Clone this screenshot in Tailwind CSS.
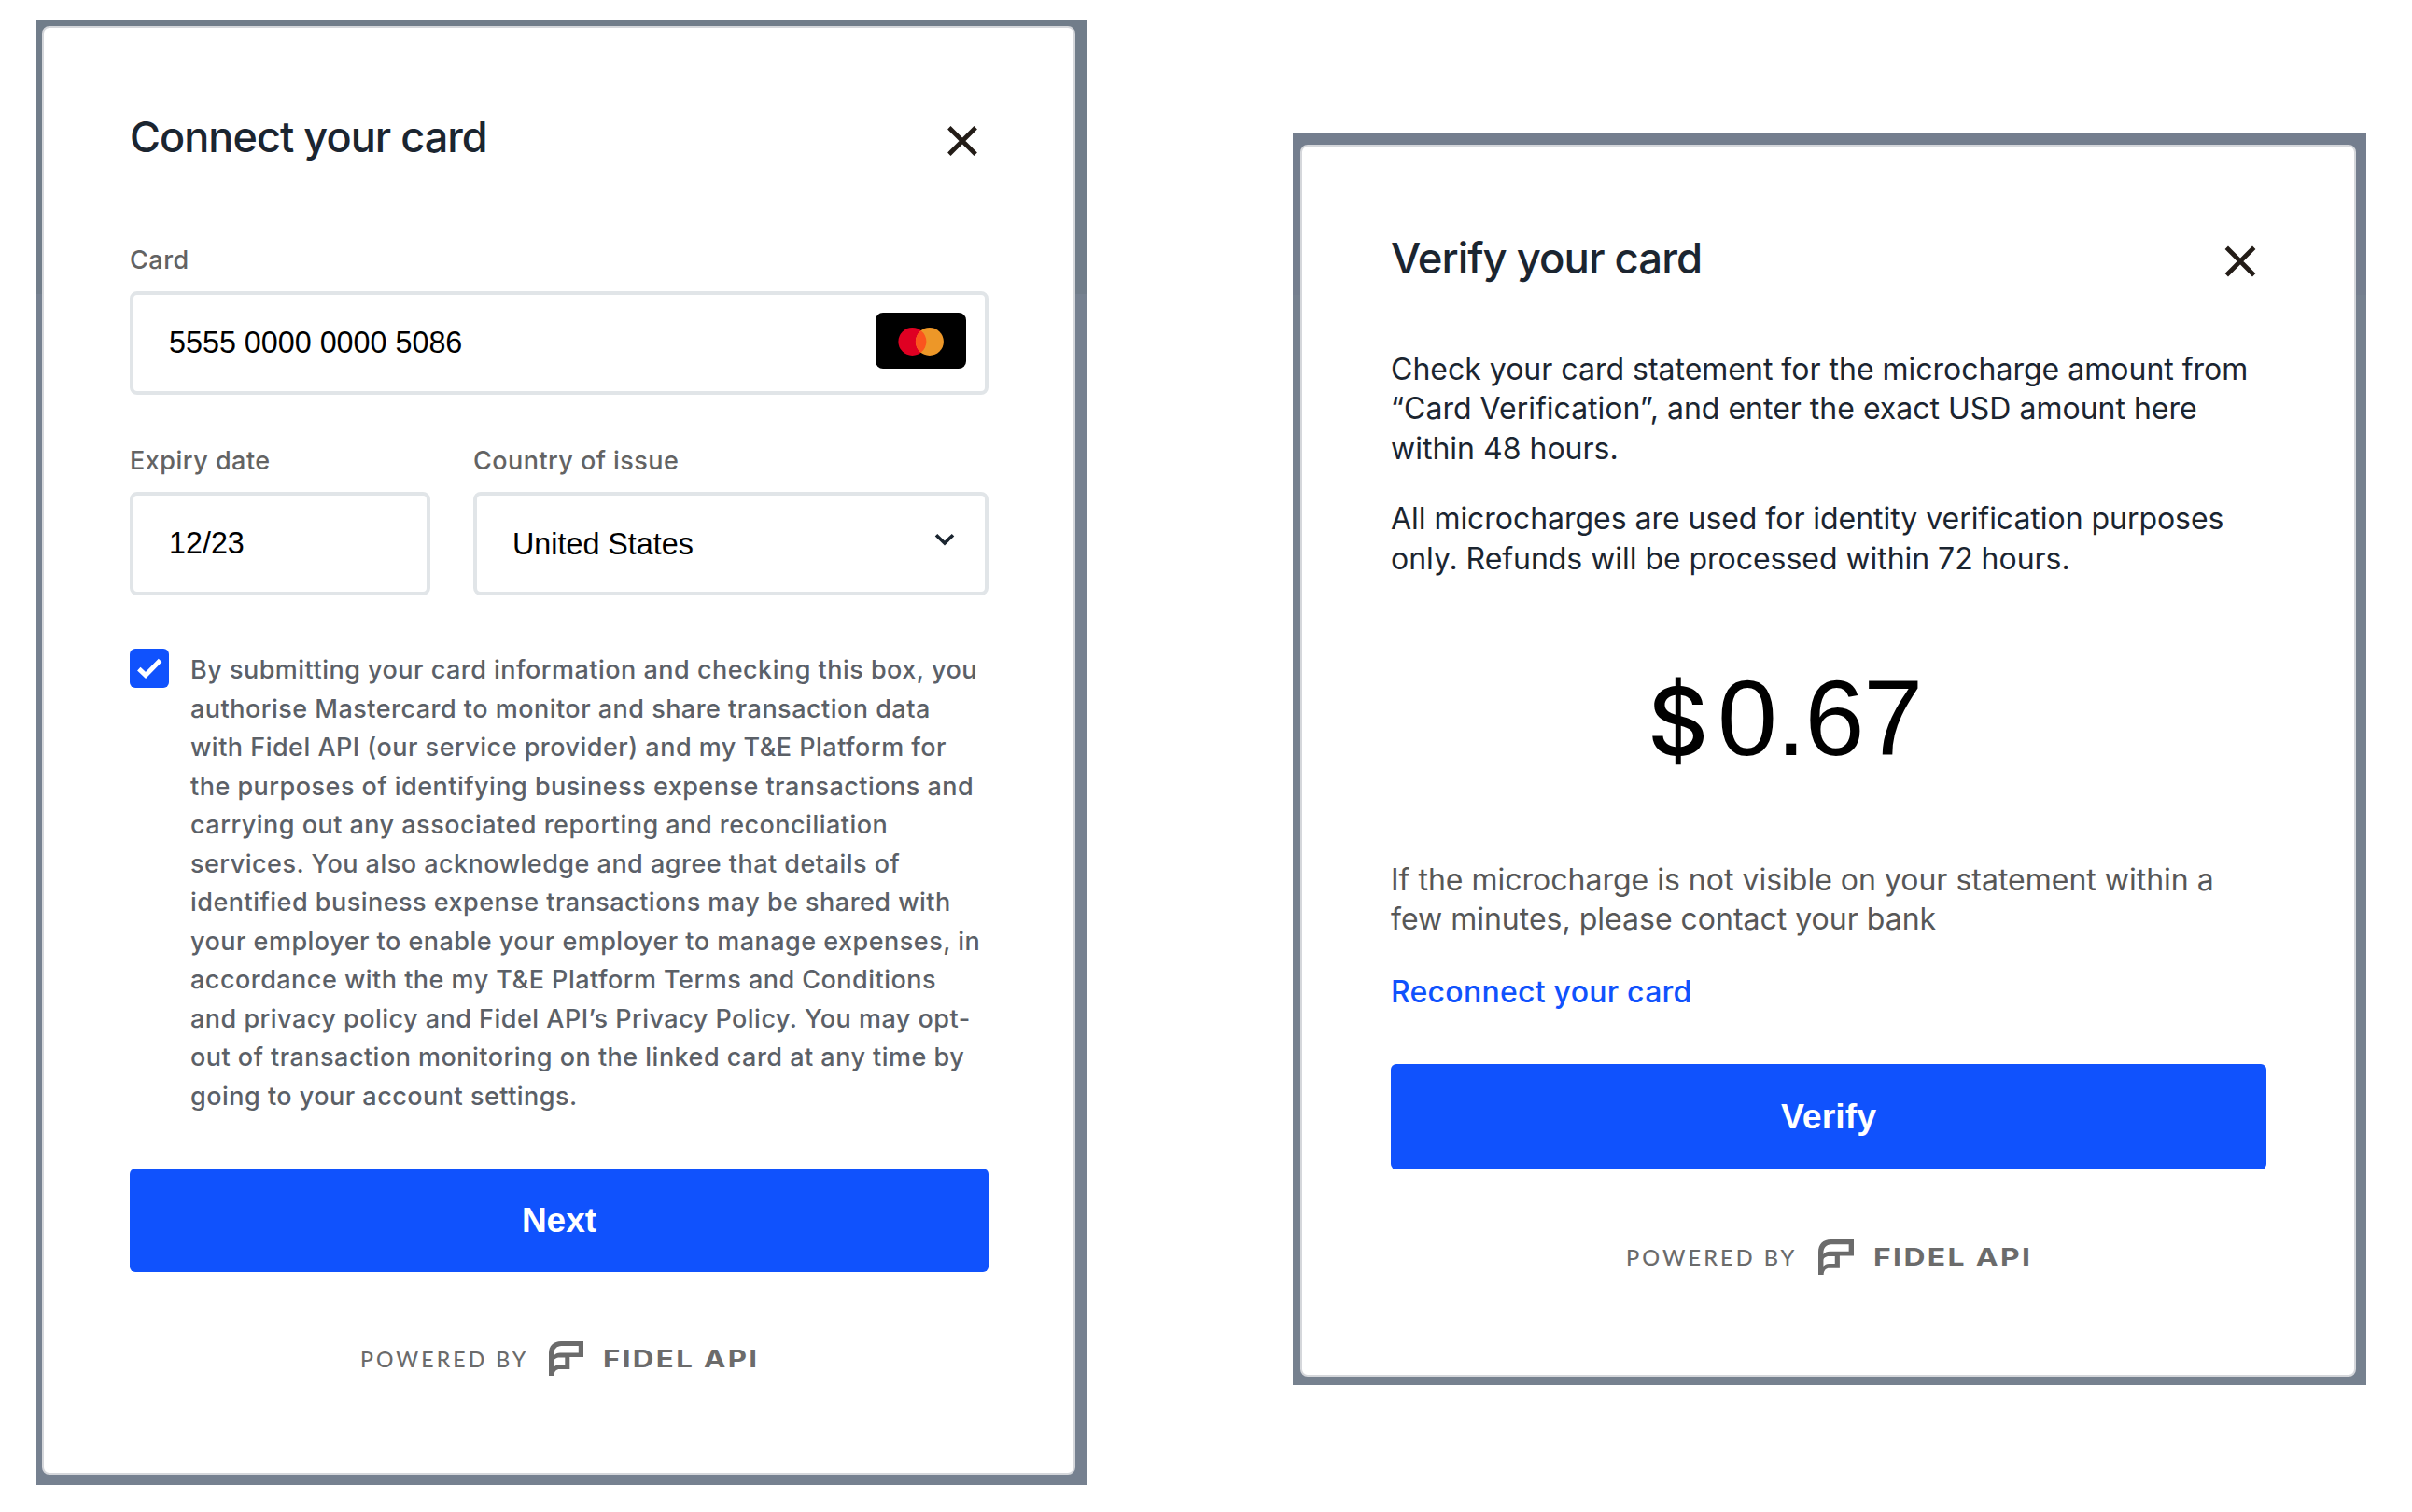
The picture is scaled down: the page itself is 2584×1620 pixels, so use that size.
<!DOCTYPE html>
<html lang="en">
<head>
<meta charset="utf-8">
<title>Card verification</title>
<script src="https://cdn.jsdelivr.net/npm/@tailwindcss/browser@4"></script>
</head>
<body class="w-[2584px] h-[1620px] overflow-hidden bg-white flex items-start font-['Inter',sans-serif]">

<!-- Connect your card -->
<section class="ml-[39px] mt-[21px] w-[1125px] h-[1570px] shrink-0 pl-[6px] pt-[7px] pr-[12px] pb-[11px] bg-[linear-gradient(#717d8a_294px,#768190_294px)]">
  <div class="h-full rounded-[8px] border-2 border-[#d5d7db] bg-white pl-[92px] pr-[91px] flex flex-col">
    <header class="mt-[87px] h-[60px] flex items-center justify-between">
      <h1 class="text-[45px] leading-[60px] font-medium tracking-[-0.96px] text-[#1b2530] whitespace-nowrap">Connect your card</h1>
      <button class="mr-[11px] mt-[7px]" aria-label="Close">
        <svg class="block" width="34" height="34" viewBox="0 0 34 34" fill="none" stroke="#231c17" stroke-width="4.8"><path d="M2.8 2.8 31.2 31.2M31.2 2.8 2.8 31.2"/></svg>
      </button>
    </header>

    <label class="mt-[87px] text-[27px] leading-[30px] font-medium tracking-[0.5px] text-[#636363]">Card</label>
    <div class="mt-[18px] h-[111px] rounded-[8px] border-[4.5px] border-[#e1e5e8] pl-[38px] pr-[20px] flex items-center justify-between font-['Liberation_Sans',sans-serif] text-black">
      <span class="-mt-[2px] text-[32.3px] leading-[40px] whitespace-nowrap">5555 0000 0000 5086</span>
      <svg class="block -mt-[5px]" width="97" height="60" viewBox="0 0 97 60">
        <rect width="97" height="60" rx="8" fill="#000"/>
        <circle cx="39.4" cy="31" r="15" fill="#df0022"/>
        <circle cx="57.9" cy="31" r="15" fill="#ed9728"/>
        <path d="M48.65 19.2a15 15 0 0 1 0 23.6a15 15 0 0 1 0-23.6z" fill="#fb541e"/>
      </svg>
    </div>

    <div class="mt-[56px] flex gap-[46px]">
      <div class="w-[322px] flex flex-col">
        <label class="text-[27px] leading-[30px] font-medium tracking-[0.5px] text-[#636363] whitespace-nowrap">Expiry date</label>
        <div class="mt-[18px] h-[111px] rounded-[8px] border-[4.5px] border-[#e1e5e8] pl-[38px] flex items-center font-['Liberation_Sans',sans-serif] text-[32.3px] leading-[40px] text-black"><span class="-mt-[2px]">12/23</span></div>
      </div>
      <div class="flex-1 flex flex-col">
        <label class="text-[27px] leading-[30px] font-medium tracking-[0.45px] text-[#636363] whitespace-nowrap">Country of issue</label>
        <div class="mt-[18px] h-[111px] rounded-[8px] border-[4.5px] border-[#e1e5e8] pl-[38px] pr-[31px] flex items-center justify-between font-['Liberation_Sans',sans-serif] text-[32.3px] leading-[40px] text-black">
          <span>United States</span>
          <svg class="block -mt-[9px]" width="24" height="16" viewBox="0 0 24 16" fill="none" stroke="#1b2530" stroke-width="3.6"><path d="M3 3.2 12 12 21 3.2"/></svg>
        </div>
      </div>
    </div>

    <div class="mt-[57px] flex items-start">
      <span class="w-[42px] h-[42px] rounded-[6px] bg-[#1052fd] shrink-0">
        <svg class="block" width="42" height="42" viewBox="0 0 42 42" fill="none" stroke="#fff" stroke-width="5"><path d="M9.8 21.6 17 28.4 32.6 12.6"/></svg>
      </span>
      <p class="ml-[23px] mt-[2px] text-[27px] leading-[41.5px] font-medium tracking-[0.48px] text-[#5b6067] whitespace-nowrap">By submitting your card information and checking this box, you<br>authorise Mastercard to monitor and share transaction data<br>with Fidel API (our service provider) and my T&amp;E Platform for<br>the purposes of identifying business expense transactions and<br>carrying out any associated reporting and reconciliation<br>services. You also acknowledge and agree that details of<br>identified business expense transactions may be shared with<br>your employer to enable your employer to manage expenses, in<br>accordance with the my T&amp;E Platform Terms and Conditions<br>and privacy policy and Fidel API’s Privacy Policy. You may opt-<br>out of transaction monitoring on the linked card at any time by<br>going to your account settings.</p>
    </div>

    <button class="mt-[57px] h-[111px] shrink-0 rounded-[6px] bg-[#1052fd] text-white font-['Liberation_Sans',sans-serif] font-bold text-[37px] leading-[44px]">Next</button>

    <footer class="mt-[74px] ml-[247px] h-[37px] flex items-center text-[#6b6b6b] whitespace-nowrap">
      <span class="w-[202px] shrink-0 font-['Lato',sans-serif] font-medium text-[23px] leading-[28px] tracking-[3.1px]">POWERED BY</span>
      <svg class="block shrink-0" width="37" height="37" viewBox="0 0 37 37" fill="#6b6b6b" fill-rule="evenodd"><path d="M0 37V13C0 5 5 0 13 0H37V17H22.3V30H11.5C8 30 5.5 32.5 5.5 37ZM5.3 15.5C6.8 13.4 9 12.5 12 12.5H31.8V5H13.5C8.5 5 5.3 8.5 5.3 13.5ZM5.3 28C6.6 26.2 8.5 25.2 11 25.2H17.3V17.5H11.5C8 17.5 5.3 19 5.3 22Z"/></svg>
      <span class="ml-[21px] inline-block origin-left scale-x-125 font-bold text-[25px] leading-[28px] tracking-[1.9px]">FIDEL API</span>
    </footer>
  </div>
</section>

<!-- Verify your card -->
<section class="ml-[221px] mt-[143px] w-[1150px] h-[1341px] shrink-0 pl-[8px] pt-[12px] pr-[11px] pb-[9px] bg-[linear-gradient(#747e8e_173px,#76818f_173px)]">
  <div class="h-full rounded-[8px] border-2 border-[#d5d7db] bg-white pl-[95px] pr-[94px] flex flex-col">
    <header class="mt-[89px] h-[60px] flex items-center justify-between">
      <h1 class="mt-[2px] text-[45.5px] leading-[60px] font-medium tracking-[-1px] text-[#1b2530] whitespace-nowrap">Verify your card</h1>
      <button class="mr-[11px] mt-[7px]" aria-label="Close">
        <svg class="block" width="34" height="34" viewBox="0 0 34 34" fill="none" stroke="#231c17" stroke-width="4.8"><path d="M2.3 2.3 31.7 31.7M31.7 2.3 2.3 31.7"/></svg>
      </button>
    </header>

    <p class="mt-[69px] text-[32px] leading-[42.4px] text-[#1b2530] whitespace-nowrap">Check your card statement for the microcharge amount from<br>“Card Verification”, and enter the exact USD amount here<br>within 48 hours.</p>
    <p class="mt-[33px] text-[32px] leading-[42.4px] tracking-[-0.04px] text-[#1b2530] whitespace-nowrap">All microcharges are used for identity verification purposes<br>only. Refunds will be processed within 72 hours.</p>

    <div class="mt-[74px] ml-[275px] h-[150px] flex items-baseline text-black leading-[150px]">
      <span class="w-[75px] font-medium text-[101px]">$</span>
      <span class="font-['Liberation_Sans',sans-serif] text-[115px] tracking-[-1.2px]">0.67</span>
    </div>

    <p class="mt-[78px] text-[32px] leading-[42.4px] text-[#575757] whitespace-nowrap">If the microcharge is not visible on your statement within a<br>few minutes, please contact your bank</p>
    <a class="mt-[35px] text-[32px] leading-[42px] font-medium tracking-[0.25px] text-[#1052fd]">Reconnect your card</a>

    <button class="mt-[56px] h-[113px] shrink-0 rounded-[6px] bg-[#1052fd] text-white font-['Liberation_Sans',sans-serif] font-bold text-[37.5px] leading-[44px]">Verify</button>

    <footer class="mt-[75px] ml-[252px] h-[38px] flex items-center text-[#6b6b6b] whitespace-nowrap">
      <span class="w-[206px] shrink-0 font-['Lato',sans-serif] font-medium text-[23.5px] leading-[28px] tracking-[3.1px]">POWERED BY</span>
      <svg class="block shrink-0" width="38" height="38" viewBox="0 0 37 37" fill="#6b6b6b" fill-rule="evenodd"><path d="M0 37V13C0 5 5 0 13 0H37V17H22.3V30H11.5C8 30 5.5 32.5 5.5 37ZM5.3 15.5C6.8 13.4 9 12.5 12 12.5H31.8V5H13.5C8.5 5 5.3 8.5 5.3 13.5ZM5.3 28C6.6 26.2 8.5 25.2 11 25.2H17.3V17.5H11.5C8 17.5 5.3 19 5.3 22Z"/></svg>
      <span class="ml-[21px] inline-block origin-left scale-x-125 font-bold text-[25.5px] leading-[28px] tracking-[1.9px]">FIDEL API</span>
    </footer>
  </div>
</section>
</body>
</html>
